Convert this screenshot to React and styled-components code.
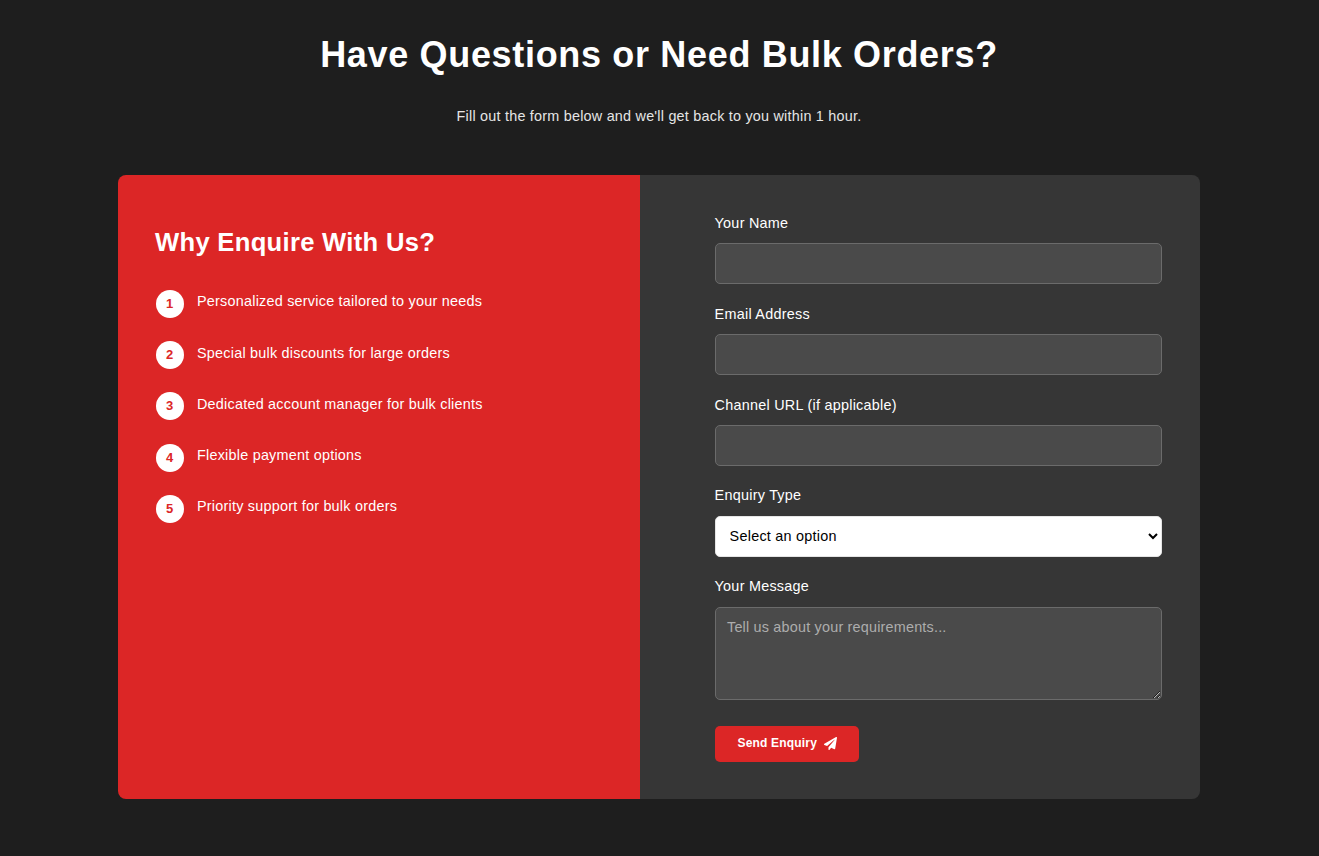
import React from 'react'
import styled, { createGlobalStyle } from 'styled-components'
import { FaPaperPlane } from 'react-icons/fa'

const GlobalStyle = createGlobalStyle`
  * { box-sizing: border-box; }
  html, body { margin: 0; padding: 0; background: #1e1e1e; }
  body { font-family: "Liberation Sans", Arial, sans-serif; color: #fff; overflow: hidden; }
`

const reasons = [
  'Personalized service tailored to your needs',
  'Special bulk discounts for large orders',
  'Dedicated account manager for bulk clients',
  'Flexible payment options',
  'Priority support for bulk orders',
]

const Section = styled.section`
  height: 856px;
  padding-top: 33px;
`

const Title = styled.h1`
  margin: 0;
  padding-right: 1px;
  font-size: 36px;
  line-height: 43px;
  font-weight: 700;
  letter-spacing: 0.67px;
  text-align: center;
`

const Subtitle = styled.p`
  margin: 28px 0 0;
  padding-right: 1px;
  font-size: 14.4px;
  line-height: 24px;
  letter-spacing: 0.22px;
  text-align: center;
  color: #e5e5e5;
`

const Card = styled.div`
  display: grid;
  grid-template-columns: 522px 560px;
  width: 1082px;
  height: 624px;
  margin: 47px 0 0 118px;
  border-radius: 8px;
  overflow: hidden;
`

const InfoPanel = styled.div`
  background: #dc2626;
  padding: 50px 37px;
`

const InfoTitle = styled.h2`
  margin: 0 0 28px;
  font-size: 25.6px;
  line-height: 35px;
  font-weight: 700;
  letter-spacing: 0.3px;
`

const ReasonList = styled.ul`
  margin: 0;
  padding: 0;
  list-style: none;
`

const Reason = styled.li`
  display: flex;
  gap: 13.5px;
  height: 51.2px;
  font-size: 14.4px;
  line-height: 24px;
  letter-spacing: 0.23px;
`

const Badge = styled.span`
  flex: none;
  display: flex;
  align-items: center;
  justify-content: center;
  width: 28px;
  height: 28px;
  margin: 2px 0 0 0.5px;
  border-radius: 50%;
  background: #fff;
  color: #dc2626;
  font-size: 13px;
  font-weight: 700;
  letter-spacing: 0;
`

const ReasonText = styled.span`
  margin-top: 1.4px;
`

const FormPanel = styled.form`
  background: #363636;
  padding: 37px 37.6px 37px 74.6px;
`

const Field = styled.div`
  margin-bottom: 18.6px;
`

const Label = styled.label`
  display: block;
  margin-bottom: 9.4px;
  font-size: 14.4px;
  line-height: 22px;
  letter-spacing: 0.25px;
  color: #fff;
`

const TextInput = styled.input`
  display: block;
  width: 100%;
  height: 40.8px;
  border: 1px solid #6b6b6b;
  border-radius: 5px;
  background: #4a4a4a;
  color: #fff;
  outline: none;
`

const Select = styled.select`
  display: block;
  width: 100%;
  height: 40.8px;
  padding: 0 10px;
  border: 1px solid #e5e5e5;
  border-radius: 5px;
  background: #fff;
  color: #000;
  font-family: inherit;
  font-size: 14.4px;
  letter-spacing: 0.25px;
`

const Message = styled.textarea`
  display: block;
  width: 100%;
  height: 93px;
  padding: 10px 11.4px;
  border: 1px solid #6b6b6b;
  border-radius: 5px;
  background: #4a4a4a;
  color: #fff;
  font-family: inherit;
  font-size: 14.4px;
  line-height: 18px;
  letter-spacing: 0.2px;
  outline: none;

  &::placeholder { color: #adadad; opacity: 1; }
`

const SendButton = styled.button`
  display: inline-flex;
  align-items: center;
  gap: 7px;
  height: 36px;
  margin-top: 7.8px;
  padding: 0 22px 1px 23px;
  border: 0;
  border-radius: 5px;
  background: #dc2626;
  color: #fff;
  font-family: inherit;
  font-size: 12px;
  font-weight: 700;
  letter-spacing: 0.17px;

  svg { font-size: 13px; }
`

export default function App() {
  return (
    <>
      <GlobalStyle />
      <Section>
        <Title>Have Questions or Need Bulk Orders?</Title>
        <Subtitle>Fill out the form below and we'll get back to you within 1 hour.</Subtitle>
        <Card>
          <InfoPanel>
            <InfoTitle>Why Enquire With Us?</InfoTitle>
            <ReasonList>
              {reasons.map((text, i) => (
                <Reason key={text}>
                  <Badge>{i + 1}</Badge>
                  <ReasonText>{text}</ReasonText>
                </Reason>
              ))}
            </ReasonList>
          </InfoPanel>
          <FormPanel onSubmit={(e) => e.preventDefault()}>
            <Field>
              <Label htmlFor="name">Your Name</Label>
              <TextInput id="name" type="text" />
            </Field>
            <Field>
              <Label htmlFor="email">Email Address</Label>
              <TextInput id="email" type="email" />
            </Field>
            <Field>
              <Label htmlFor="channel">Channel URL (if applicable)</Label>
              <TextInput id="channel" type="url" />
            </Field>
            <Field>
              <Label htmlFor="type">Enquiry Type</Label>
              <Select id="type" defaultValue="">
                <option value="">Select an option</option>
                <option value="bulk">Bulk order</option>
                <option value="other">Other</option>
              </Select>
            </Field>
            <Field>
              <Label htmlFor="message">Your Message</Label>
              <Message id="message" placeholder="Tell us about your requirements..." />
            </Field>
            <SendButton type="submit">
              Send Enquiry <FaPaperPlane />
            </SendButton>
          </FormPanel>
        </Card>
      </Section>
    </>
  )
}
